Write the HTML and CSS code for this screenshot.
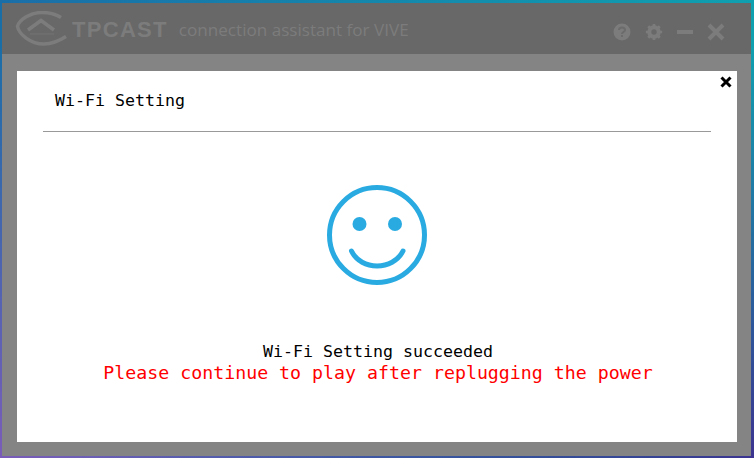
FILE: index.html
```html
<!DOCTYPE html>
<html lang="en">
<head>
    <meta charset="UTF-8">
    <meta name="viewport" content="width=device-width, initial-scale=1.0">
    <title>TPCAST connection assistant for VIVE</title>
    <link rel="stylesheet" href="styles.css">
</head>
<body>
    <div class="window">
        <div class="titlebar">
            <svg class="logo" width="52" height="36" viewBox="0 0 52 36" fill="none" stroke="#7c7c7c">
                <path d="M46 6.500C40 2.500 33 1.500 27 1.500C15 1.500 4 9 2.500 15.500C4 23 15 33 29 33C37 33 44 30 51 25.500" stroke-width="3.500"/>
                <path d="M13 19L26 9.500L39 19" stroke-width="3.500"/>
                <path d="M15 23H39" stroke-width="1" stroke-opacity="0.6"/>
            </svg>
            <span class="brand">TPCAST</span>
            <span class="subtitle">connection assistant for VIVE</span>
            <div class="controls">
                <svg width="18" height="18" viewBox="0 0 18 18">
                    <circle cx="9" cy="9" r="8.500" fill="#7c7c7c"/>
                    <path d="M6 7C6 3.500 12 3.500 12 7C12 9 9 9 9 11" fill="none" stroke="#6c6c6c" stroke-width="2"/>
                    <rect x="8" y="12" width="2" height="2" fill="#6c6c6c"/>
                </svg>
                <svg width="18" height="18" viewBox="0 0 20 20">
                    <circle cx="10" cy="10" r="5.500" fill="none" stroke="#7c7c7c" stroke-width="4"/>
                    <path d="M10 1V19M1 10H19M3.600 3.600L16.400 16.400M16.400 3.600L3.600 16.400" stroke="#7c7c7c" stroke-width="3"/>
                    <circle cx="10" cy="10" r="3" fill="#686868"/>
                </svg>
                <svg width="16" height="18" viewBox="0 0 16 18">
                    <rect x="0" y="7" width="16" height="4" fill="#7c7c7c"/>
                </svg>
                <svg width="18" height="18" viewBox="0 0 18 18">
                    <path d="M2 2L16 16M16 2L2 16" stroke="#7c7c7c" stroke-width="4"/>
                </svg>
            </div>
        </div>
        <div class="content">
            <div class="dialog">
                <button class="close">
                    <svg width="12" height="12" viewBox="0 0 12 12">
                        <path d="M1.500 1.500L10.500 10.500M10.500 1.500L1.500 10.500" stroke="#000" stroke-width="3"/>
                    </svg>
                </button>
                <h1 class="dialog-title">Wi-Fi Setting</h1>
                <div class="divider"></div>
                <svg class="smile" width="100" height="100" viewBox="0 0 100 100" fill="none" stroke="#29abe2">
                    <circle cx="50" cy="50" r="47.500" stroke-width="5"/>
                    <circle cx="32.500" cy="39" r="7" fill="#29abe2" stroke="none"/>
                    <circle cx="68" cy="39" r="7" fill="#29abe2" stroke="none"/>
                    <path d="M24.500 66C34 86 66 86 76 66" stroke-width="5" stroke-linecap="round"/>
                </svg>
                <p class="msg">Wi-Fi Setting succeeded</p>
                <p class="msg warn">Please continue to play after replugging the power</p>
            </div>
        </div>
    </div>
</body>
</html>
```

FILE: styles.css
```css
html, body {
    height: 100%;
}
body {
    margin: 0;
    padding: 3px 3px 2px 2px;
    box-sizing: border-box;
    overflow: hidden;
    background:
        linear-gradient(to top left, #3c3490 0, rgba(60, 52, 144, 0) 45%),
        linear-gradient(to top right, #7a5cb8 0, rgba(122, 92, 184, 0) 45%),
        linear-gradient(90deg, #1a6ea8, #0fa0b0);
    font-family: "DejaVu Sans Mono", monospace;
}
.window {
    height: 453px;
    display: flex;
    flex-direction: column;
    background: #848484;
}
.titlebar {
    height: 51px;
    display: flex;
    align-items: center;
    background: #686868;
    padding: 0 26px 0 13px;
}
.logo {
    margin-right: 5px;
}
.brand {
    font-family: "Liberation Sans", sans-serif;
    font-weight: bold;
    font-size: 22px;
    letter-spacing: 1.300px;
    color: #7c7c7c;
    padding-top: 2px;
}
.subtitle {
    margin-left: 11px;
    font-family: "Open Sans", sans-serif;
    font-size: 17.100px;
    color: #7c7c7c;
    padding-top: 2px;
}
.controls {
    margin-left: auto;
    display: flex;
    align-items: center;
    gap: 14px;
    padding-top: 7px;
}
.content {
    flex: 1;
    padding: 17px 14px 14px 15px;
}
.dialog {
    position: relative;
    height: 100%;
    display: flex;
    flex-direction: column;
    align-items: center;
    background: #fff;
}
.close {
    position: absolute;
    top: 5px;
    right: 5px;
    padding: 0;
    border: none;
    background: none;
    line-height: 0;
}
.dialog-title {
    align-self: flex-start;
    margin: 19px 0 0 38px;
    font-size: 16.600px;
    line-height: 22px;
    font-weight: normal;
    color: #000;
}
.divider {
    align-self: stretch;
    height: 1px;
    margin: 19px 26px 0;
    background: #999;
}
.smile {
    margin-top: 53px;
}
.msg {
    margin: 0;
    padding-left: 2px;
    font-size: 16.600px;
    line-height: 22px;
    color: #000;
}
.smile + .msg {
    margin-top: 56px;
}
.warn {
    margin-top: -1px;
    font-size: 18.250px;
    color: #f00;
}
```
